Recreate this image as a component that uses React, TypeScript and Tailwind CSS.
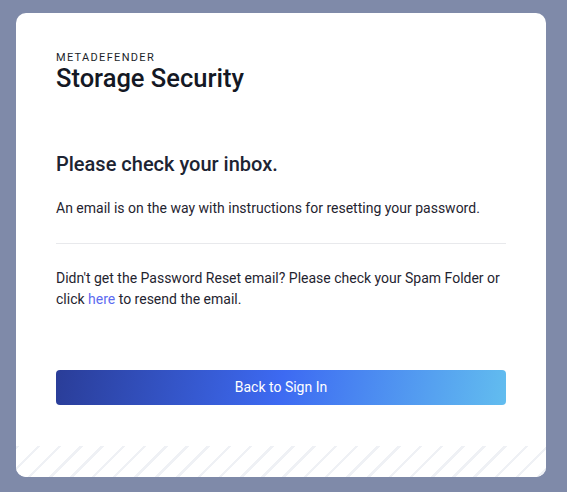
export default function App() {
  return (
    <div className="w-[567px] h-[492px] bg-[#7f8aa9] pt-[13px] pl-[16px] overflow-hidden" style={{ fontFamily: "Roboto, 'Liberation Sans', sans-serif" }}>
      <div className="w-[530px] h-[464px] rounded-[10px] bg-white overflow-hidden flex flex-col">
        <div className="px-[40px] pt-[38px]">
          <div className="text-[11px] leading-[13px] tracking-[0.12em] text-[#1b1f2a]">METADEFENDER</div>
          <div className="text-[25.5px] leading-[28px] font-medium text-[#141824]">Storage Security</div>

          <h1 className="mt-[60px] text-[20px] leading-[24px] font-medium text-[#1d2433]">Please check your inbox.</h1>
          <p className="mt-[22px] text-[14px] leading-[21px] text-[#1f2430]">
            An email is on the way with instructions for resetting your password.
          </p>

          <div className="mt-[24px] border-t border-[#e8e9ec]" />

          <p className="mt-[24px] text-[14px] leading-[21px] text-[#1f2430]">
            Didn't get the Password Reset email? Please check your Spam Folder or click{" "}
            <a className="text-[#5d6cf0] cursor-pointer">here</a> to resend the email.
          </p>

          <button className="mt-[60px] w-full h-[35px] rounded-[4px] text-white text-[14px] bg-[linear-gradient(100deg,#2a3d98_0%,#3d6af2_50%,#62bdef_100%)]">
            Back to Sign In
          </button>
        </div>

        <div className="mt-auto h-[31px] bg-[repeating-linear-gradient(135deg,#eff1f5_0px,#eff1f5_2.5px,#ffffff_2.5px,#ffffff_15px)]" />
      </div>
    </div>
  );
}
